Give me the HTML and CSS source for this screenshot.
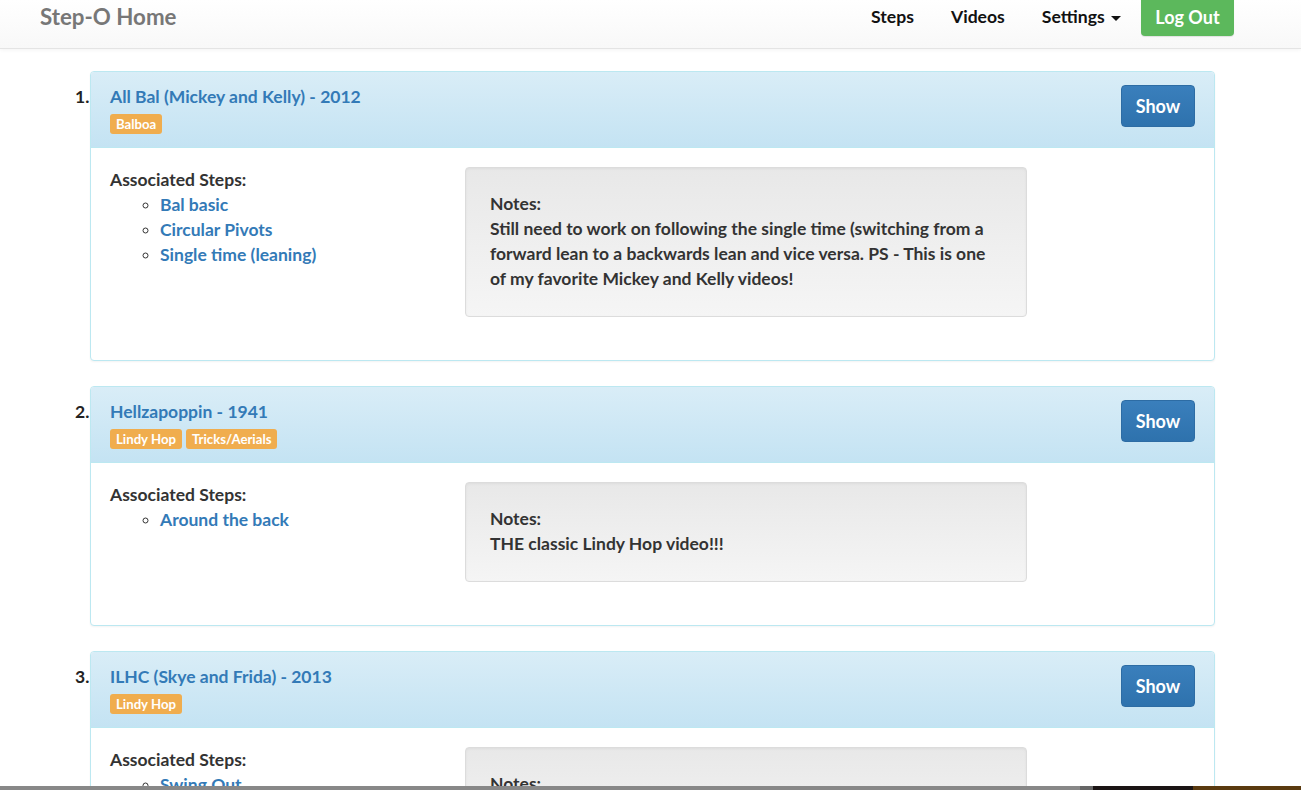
FILE: index.html
```html
<!DOCTYPE html>
<html lang="en">
<head>
<meta charset="utf-8">
<title>Step-O Home</title>
<link rel="stylesheet" href="styles.css">
</head>
<body>
<nav class="navbar">
  <a class="brand" href="#">Step-O Home</a>
  <div class="nav-right">
    <a class="nav-link" href="#">Steps</a>
    <a class="nav-link" href="#">Videos</a>
    <a class="nav-link" href="#">Settings <span class="caret"></span></a>
    <a class="btn-logout" href="#">Log Out</a>
  </div>
</nav>

<ol class="videos">
  <li class="video">
    <span class="num">1.</span>
    <div class="panel">
      <div class="panel-heading">
        <div class="heading-text">
          <a class="title" href="#">All Bal (Mickey and Kelly) - 2012</a>
          <div class="labels"><span class="label">Balboa</span></div>
        </div>
        <a class="btn-show" href="#">Show</a>
      </div>
      <div class="panel-body">
        <div class="steps">
          <div class="steps-title">Associated Steps:</div>
          <ul class="step-list">
            <li><a href="#">Bal basic</a></li>
            <li><a href="#">Circular Pivots</a></li>
            <li><a href="#">Single time (leaning)</a></li>
          </ul>
        </div>
        <div class="well">
          <div>Notes:</div>
          <div>Still need to work on following the single time (switching from a forward lean to a backwards lean and vice versa. PS - This is one of my favorite Mickey and Kelly videos!</div>
        </div>
      </div>
    </div>
  </li>
  <li class="video">
    <span class="num">2.</span>
    <div class="panel">
      <div class="panel-heading">
        <div class="heading-text">
          <a class="title" href="#">Hellzapoppin - 1941</a>
          <div class="labels"><span class="label">Lindy Hop</span><span class="label">Tricks/Aerials</span></div>
        </div>
        <a class="btn-show" href="#">Show</a>
      </div>
      <div class="panel-body">
        <div class="steps">
          <div class="steps-title">Associated Steps:</div>
          <ul class="step-list">
            <li><a href="#">Around the back</a></li>
          </ul>
        </div>
        <div class="well">
          <div>Notes:</div>
          <div>THE classic Lindy Hop video!!!</div>
        </div>
      </div>
    </div>
  </li>
  <li class="video">
    <span class="num">3.</span>
    <div class="panel">
      <div class="panel-heading">
        <div class="heading-text">
          <a class="title" href="#">ILHC (Skye and Frida) - 2013</a>
          <div class="labels"><span class="label">Lindy Hop</span></div>
        </div>
        <a class="btn-show" href="#">Show</a>
      </div>
      <div class="panel-body">
        <div class="steps">
          <div class="steps-title">Associated Steps:</div>
          <ul class="step-list">
            <li><a href="#">Swing Out</a></li>
          </ul>
        </div>
        <div class="well">
          <div>Notes:</div>
          <div>Great competition routine.</div>
        </div>
      </div>
    </div>
  </li>
</ol>
<div class="dock"><span class="d1"></span><span class="d2"></span><span class="d3"></span><span class="d4"></span></div>
</body>
</html>
```
FILE: styles.css
```css
* { box-sizing: border-box; }
html, body { margin: 0; padding: 0; }
body {
  font-family: Lato, "Open Sans", "Liberation Sans", sans-serif;
  font-weight: 700;
  font-size: 17.5px;
  line-height: 25px;
  color: #333;
  background: #fff;
  overflow: hidden;
  height: 790px;
}
a { text-decoration: none; color: #337ab7; }

.navbar {
  height: 49px;
  display: flex;
  justify-content: space-between;
  align-items: flex-start;
  background: linear-gradient(#ffffff, #f8f8f8);
  border-bottom: 1px solid #e4e4e4;
  box-shadow: 0 1px 4px rgba(0,0,0,0.05);
  padding: 0 67px 0 40px;
}
.brand {
  color: #777;
  font-size: 22.3px;
  line-height: 30px;
  padding-top: 2px;
}
.nav-right { display: flex; align-items: flex-start; }
.nav-link {
  color: #111;
  font-size: 17.6px;
  line-height: 25px;
  padding-top: 4px;
  margin-right: 37px;
}
.nav-link:nth-child(3) { margin-right: 20px; }
.caret {
  display: inline-block;
  width: 0; height: 0;
  margin-left: 2px;
  vertical-align: middle;
  border-top: 5px solid #111;
  border-left: 5px solid transparent;
  border-right: 5px solid transparent;
}
.btn-logout {
  display: block;
  width: 93px;
  height: 44px;
  margin-top: -8px;
  padding-top: 13px;
  text-align: center;
  color: #fff;
  font-size: 18px;
  line-height: 25px;
  background: #5cb85c;
  border-radius: 4px;
  box-shadow: 0 1px 1px rgba(0,0,0,0.1);
}

.videos {
  list-style: none;
  margin: 22px 86px 0 75px;
  padding: 0;
}
.video {
  display: flex;
  align-items: flex-start;
  margin-bottom: 25px;
}
.num {
  width: 15px;
  padding-top: 13px;
  flex: none;
  color: #222;
}
.panel {
  flex: 1;
  border: 1px solid #bce8f1;
  border-radius: 4px;
  background: #fff;
  box-shadow: 0 1px 2px rgba(0,0,0,0.05);
}
.panel-heading {
  display: flex;
  justify-content: space-between;
  align-items: flex-start;
  padding: 12px 19px 13px 19px;
  background: linear-gradient(#d9edf7, #c4e3f3);
  border-bottom: 1px solid #bce8f1;
  border-radius: 3px 3px 0 0;
}
.title { line-height: 25px; display: block; }
.labels { display: flex; gap: 4px; margin-top: 5px; }
.label {
  display: inline-block;
  background: #f0ad4e;
  color: #fff;
  font-size: 13.2px;
  line-height: 20px;
  height: 20px;
  padding: 0 6px;
  border-radius: 3px;
}
.btn-show {
  display: block;
  width: 74px;
  height: 42px;
  margin-top: 1px;
  text-align: center;
  line-height: 40px;
  font-size: 18px;
  color: #fff;
  background: linear-gradient(#3a7fbc, #2e72ad);
  border: 1px solid #2d6ca4;
  border-radius: 4px;
}
.panel-body {
  display: flex;
  align-items: flex-start;
  padding: 19px 19px 21px 19px;
}
.steps { width: 355px; flex: none; }
.steps-title { line-height: 25px; }
.step-list {
  margin: 0;
  padding-left: 50px;
  list-style: circle;
}
.step-list li::marker { font-size: 15px; color: #333; }
.well {
  width: 562px;
  flex: none;
  padding: 23px 24px 25px 24px;
  background: linear-gradient(#e8e8e8, #f5f5f5);
  border: 1px solid #dcdcdc;
  border-radius: 4px;
  box-shadow: inset 0 1px 3px rgba(0,0,0,0.05), 0 1px 0 rgba(255,255,255,0.1);
  margin-bottom: 22px;
  color: #333;
}

.dock {
  position: fixed;
  left: 0; right: 0; bottom: 0;
  height: 4px;
  display: flex;
}
.dock span { display: block; height: 4px; }
.d1 { width: 1080px; background: #888; }
.d2 { width: 13px; background: #666; }
.d3 { width: 100px; background: #1b1515; }
.d4 { flex: 1; background: #5a3a10; }
```
